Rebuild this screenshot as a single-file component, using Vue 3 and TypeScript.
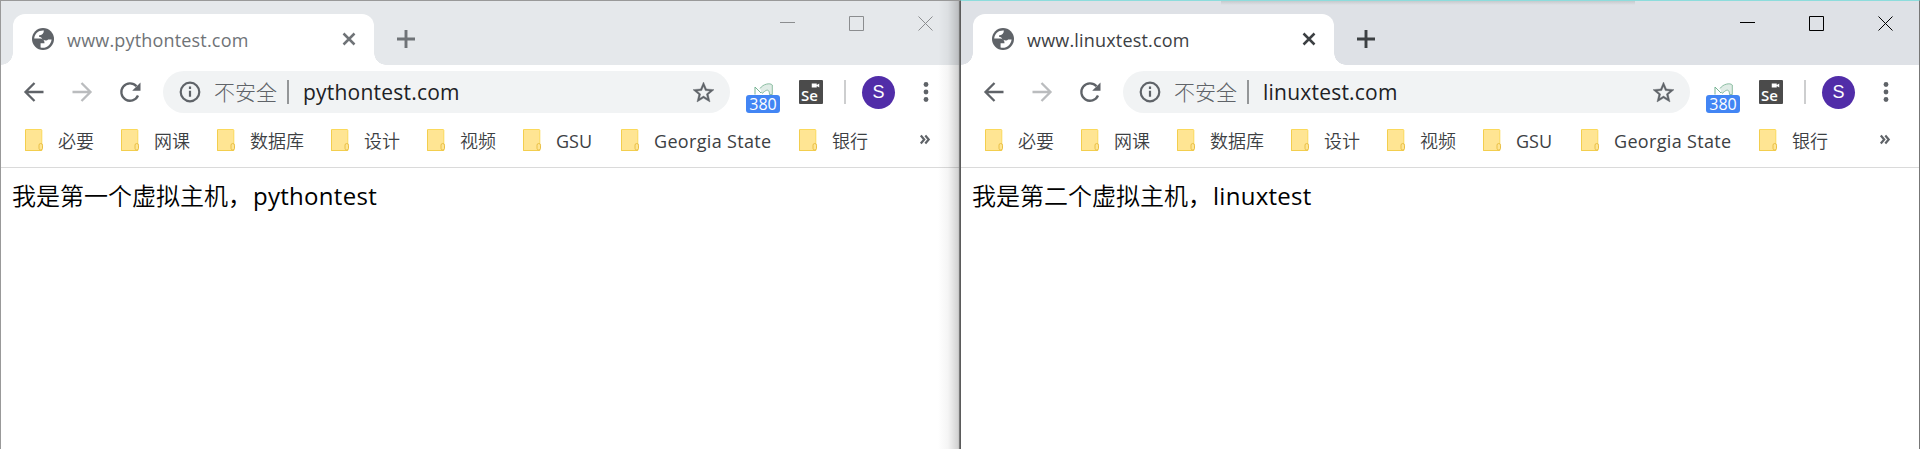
<script setup lang="ts">
interface BrowserWindow {
  id: string
  active: boolean
  title: string
  address: string
  message: string
  word: string
}

const windows: BrowserWindow[] = [
  { id: 'python', active: false, title: 'www.pythontest.com', address: 'pythontest.com', message: '我是第一个虚拟主机，', word: 'pythontest' },
  { id: 'linux', active: true, title: 'www.linuxtest.com', address: 'linuxtest.com', message: '我是第二个虚拟主机，', word: 'linuxtest' },
]

const bookmarks: string[] = ['必要', '网课', '数据库', '设计', '视频', 'GSU', 'Georgia State', '银行']
</script>

<template>
  <main class="desktop">
    <section v-for="w in windows" :key="w.id" class="window" :class="{ active: w.active }">
      <header class="strip">
        <div class="tab">
          <svg class="globe" viewBox="2 2 20 20"><circle cx="12" cy="12" r="10" fill="#5f6368" /><path fill="#fff" d="M12.8 4.200C8 3.800 4.300 7 4 11.600h5.400c2.600 0 4 1.500 4 4.200h-3.600v3.900c4.800 1.300 9.500-2.300 10-7.300h-3.200c-.8 1.200-3 1.300-4.300.3-1.400-1-1.400-2.600-3.800-2.600V8.500c2.500 0 4.300-1.500 4.300-4.300z" /></svg>
          <span class="title">{{ w.title }}</span>
          <svg class="close" viewBox="0 0 14 14"><path d="M1.500 1.500l11 11m0-11l-11 11" /></svg>
        </div>
        <svg class="plus" viewBox="0 0 18 18"><path d="M9 0v18M0 9h18" /></svg>
        <div class="controls">
          <svg viewBox="0 0 15 15"><path d="M0 6.500h15" /></svg>
          <svg viewBox="0 0 15 15"><path d="M.5.5h14v14H.5z" /></svg>
          <svg viewBox="0 0 15 15"><path d="M.5.5l14 14m0-14l-14 14" /></svg>
        </div>
      </header>
      <nav class="toolbar">
        <svg class="nav" viewBox="0 0 20 20"><path d="M19.500 10H1.500m9-9l-9 9 9 9" /></svg>
        <svg class="nav muted" viewBox="0 0 20 20"><path d="M.5 10h18m-9-9l9 9-9 9" /></svg>
        <svg class="nav reload" viewBox="0.500 0 22 20"><path d="M18.500 13.500A8.700 8.700 0 1 1 17 4.200" /><path class="solid" d="M21 .5v8.300h-8.300z" /></svg>
        <div class="omnibox">
          <svg class="info" viewBox="0 0 22 22"><circle cx="11" cy="11" r="9.300" /><path d="M11 9.800v6M11 5.500v2.500" /></svg>
          <span class="security">不安全</span>
          <i class="rule"></i>
          <span class="address">{{ w.address }}</span>
          <svg class="star" viewBox="2 2 20 19"><path d="M22 9.240l-7.190-.62L12 2 9.190 8.630 2 9.240l5.460 4.730L5.820 21 12 17.270 18.180 21l-1.630-7.030L22 9.240zM12 15.400l-3.760 2.270 1-4.280-3.320-2.880 4.380-.38L12 6.100l1.710 4.040 4.380.38-3.320 2.880 1 4.280L12 15.400z" /></svg>
        </div>
        <div class="counter">
          <svg viewBox="0 0 19 12"><path fill="#fff" stroke="#76b393" d="M1 11.500V4l6 6 4-5" /><path fill="#e0ece6" stroke="#7fb798" stroke-width=".9" d="M6 5.500C9 1 16-.5 18.300 2v9.500h-2.800c0-4.500-2-5.500-5-3l-2.500 2" /></svg>
          <span>380</span>
        </div>
        <div class="selenium"><svg viewBox="0 0 9 6"><path d="M0 .5h6v5H0zM6 2.500l3-2v5l-3-2z" /></svg><span>Se</span></div>
        <i class="divider"></i>
        <div class="avatar">S</div>
        <svg class="more" viewBox="0 0 6 20"><circle cx="3" cy="2.500" r="2.400" /><circle cx="3" cy="10" r="2.400" /><circle cx="3" cy="17.500" r="2.400" /></svg>
      </nav>
      <nav class="bookmarks">
        <div v-for="b in bookmarks" :key="b" class="bookmark">
          <svg viewBox="0 0 18 22"><path fill="#ffe593" stroke="#fbd95b" d="M.5.500h15.500a.8.8 0 0 1 .8.800v20.200H.5z" /><path fill="none" stroke="#f3ce4e" d="M.5 1v20.500h16" /><rect x="14" y="14.500" width="3.500" height="6.500" rx="1.700" fill="#ffe593" stroke="#eac046" /></svg>
          <span :class="{ gsu: b === 'GSU', georgia: b === 'Georgia State' }">{{ b }}</span>
        </div>
        <svg class="overflow" viewBox="0 0 10 9"><path d="M.8.500l3.400 4-3.400 4M5.300.500l3.400 4-3.400 4" /></svg>
      </nav>
      <article class="page"><span class="message">{{ w.message }}</span><span class="word">{{ w.word }}</span></article>
      <i v-if="!w.active" class="edge"></i>
      <i v-else class="overlap"></i>
    </section>
  </main>
</template>

<style>
body { margin: 0; background: #fff; overflow: hidden; }
</style>

<style scoped>
* { box-sizing: border-box; }
svg { display: block; flex: none; overflow: visible; fill: none; }
.desktop { display: flex; width: 1920px; height: 449px; font-family: "Open Sans", "Noto Sans CJK SC", sans-serif; }
.window { position: relative; width: 960px; height: 449px; overflow: hidden; background: #fff; border-left: 1px solid #999; border-top: 1px solid #999; --ink: #6f7377; }
.window.active { border-left-color: #5b5b5b; border-top-color: #8ddcdc; border-right: 1px solid #777; --ink: #3c4043; }
.strip { display: flex; height: 64px; background: #e5e8eb; padding: 13px 0 0 12px; }
.active .strip { background: #dee1e6; }
.tab { position: relative; display: flex; width: 361px; height: 51px; padding: 14px 18px 0 19px; background: #fff; border-radius: 12px 12px 0 0; }
.tab::before, .tab::after { content: ""; position: absolute; bottom: 0; width: 12px; height: 12px; }
.tab::before { left: -12px; background: radial-gradient(circle at 0 0, transparent 11.5px, #fff 12px); }
.tab::after { right: -12px; background: radial-gradient(circle at 100% 0, transparent 11.5px, #fff 12px); }
.globe { width: 22px; height: 22px; }
.title { width: 266px; margin: -1px 0 0 13px; font-size: 18px; line-height: 26px; letter-spacing: .18px; color: var(--ink); white-space: nowrap; }
.close { width: 14px; height: 14px; margin: 4px 0 0 9px; stroke: var(--ink); stroke-width: 2.5; }
.plus { width: 18px; height: 18px; margin: 16px 0 0 23px; stroke: var(--ink); stroke-width: 2.9; }
.controls { display: flex; gap: 54px; margin: 2px 0 0 auto; padding-right: 27px; }
.active .controls { padding-right: 26px; }
.controls svg { width: 15px; height: 15px; stroke: #8b8d8f; stroke-width: 1; }
.active .controls svg { stroke: #000; }
.toolbar { display: flex; align-items: center; height: 53px; padding: 1px 0 0 23px; }
.nav { width: 20px; height: 20px; margin-right: 28px; stroke: #5f6368; stroke-width: 2.3; }
.muted { stroke: #babcbe; }
.reload { width: 22px; margin-right: 21px; }
.solid { fill: #5f6368; stroke: none; }
.omnibox { display: flex; align-items: center; width: 567px; height: 42px; padding: 0 16px 0 16px; border-radius: 21px; background: #f1f3f4; }
.info { width: 22px; height: 22px; stroke: #5f6368; stroke-width: 2.2; }
.security { width: 63px; margin-left: 13px; color: #5f6368; font-size: 21px; line-height: 30px; font-weight: 300; white-space: nowrap; }
.rule { width: 2px; height: 24px; margin-left: 10px; background: #949698; }
.address { margin-left: 14px; font-size: 21px; line-height: 30px; letter-spacing: .22px; color: #202124; white-space: nowrap; }
.star { width: 21px; height: 20px; margin-left: auto; fill: #5f6368; stroke: #5f6368; stroke-width: .4; }
.counter { display: flex; flex-direction: column; align-items: center; width: 34px; height: 30px; margin: 11px 0 0 16px; }
.counter svg { width: 19px; height: 12px; }
.counter span { width: 34px; height: 18px; border-radius: 3px; background: #4285f4; color: #fff; font-size: 16px; line-height: 19px; text-align: center; }
.selenium { display: flex; flex-direction: column; width: 24px; height: 24px; margin-left: 19px; padding: 3px 3px 0 2px; border-radius: 1px; background: #4b4b4b; color: #fff; font: 600 15px/15px "Open Sans", sans-serif; }
.selenium svg { width: 9px; height: 5px; margin-left: auto; fill: #fff; }
.divider { width: 2px; height: 24px; margin-left: 21px; background: #cdcecf; }
.avatar { width: 33px; height: 33px; margin-left: 16px; border-radius: 50%; background: #512da8; color: #fff; font: 18px/33px "Liberation Sans", sans-serif; text-align: center; }
.more { width: 6px; height: 20px; margin-left: 28px; fill: #5f6368; }
.bookmarks { display: flex; height: 50px; padding: 11px 0 0 24px; border-bottom: 1px solid #dadada; }
.bookmark { display: flex; margin-right: 27px; }
.bookmark svg { width: 18px; height: 22px; }
.bookmark span { margin: -1px 0 0 15px; font-size: 18px; line-height: 26px; font-weight: 350; color: #3c4043; white-space: nowrap; }
.bookmark .gsu { width: 38px; font-weight: 400; }
.bookmark .georgia { width: 118px; font-weight: 400; letter-spacing: .33px; }
.overflow { width: 10px; height: 9px; margin: 6px 0 0 25px; stroke: #5f6368; stroke-width: 2.2; }
.page { display: flex; padding: 11px 0 0 11px; font-size: 24px; line-height: 34px; color: #000; white-space: nowrap; }
.message { width: 241px; font-weight: 350; }
.word { letter-spacing: .28px; }
.edge { position: absolute; right: 0; top: 0; width: 22px; height: 449px; background: linear-gradient(90deg, transparent, rgba(0,0,0,.04) 45%, rgba(0,0,0,.18) 93%, #777 95%); }
.overlap { position: absolute; top: -1px; left: 260px; width: 414px; height: 5px; background: linear-gradient(#78c4c4 1px, #c5cacd 1px, #dee1e6); }
</style>
